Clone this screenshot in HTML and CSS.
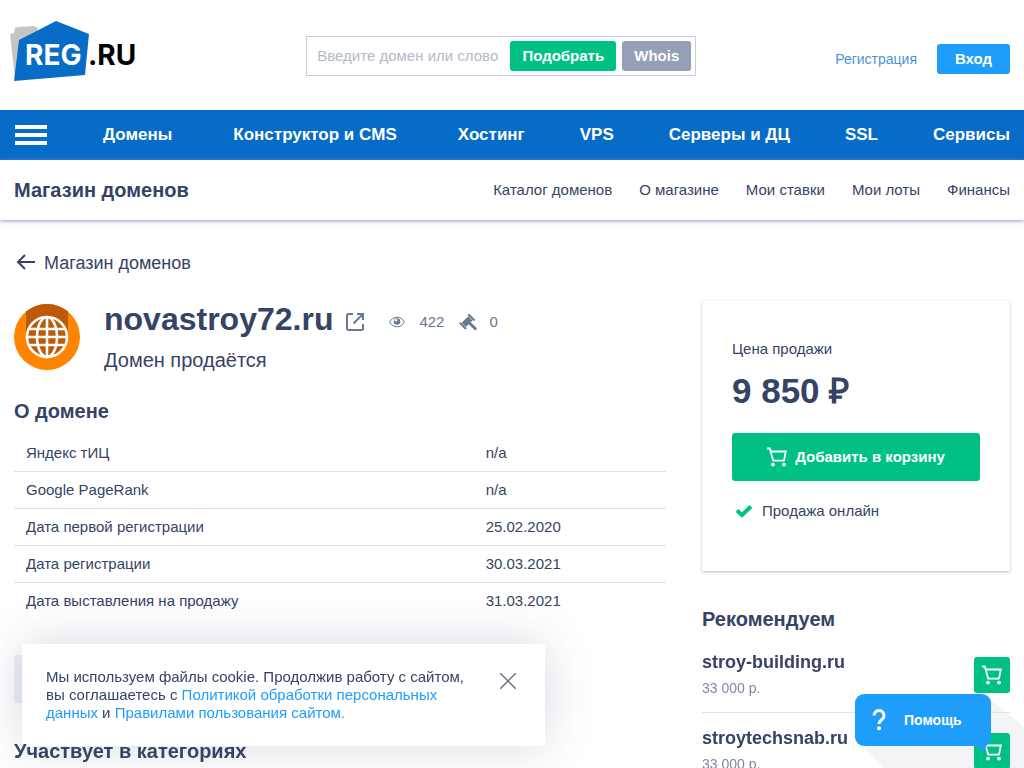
FILE: index.html
```
<!DOCTYPE html>
<html lang="ru">
<head>
<meta charset="utf-8">
<meta name="viewport" content="width=device-width, initial-scale=1">
<title>novastroy72.ru — Магазин доменов</title>
<link rel="stylesheet" href="styles.css">
</head>
<body>
<svg class="sprite" aria-hidden="true">
  <symbol id="cart" viewBox="0 0 20 20">
    <path d="M0 1.500h2.800l3.400 12.200h11.300M3.800 4.500h15L17 13.700" fill="none" stroke="currentColor" stroke-width="1.800"/>
    <circle cx="6" cy="17.600" r="1.900" fill="currentColor"/>
    <circle cx="17" cy="17.600" r="1.900" fill="currentColor"/>
  </symbol>
</svg>

<header class="header">
  <a class="logo" href="#" aria-label="REG.RU">
    <svg width="130" height="64" viewBox="0 0 130 64">
      <path d="M0 14l4-1 1-5 3-1 16-1 4 2-10 34L5 58z" fill="#c4c6c6"/>
      <path d="M46 1L79 14 75 55 4 61 9 20z" fill="#076bc8"/>
      <text class="logo-text" x="15" y="45" fill="#fff">REG</text>
      <text class="logo-text" x="78" y="45" fill="#000">.RU</text>
    </svg>
  </a>
  <form class="search">
    <input class="search-input" type="text" placeholder="Введите домен или слово" aria-label="Введите домен или слово">
    <button class="btn btn-green" type="button">Подобрать</button>
    <button class="btn btn-gray" type="button">Whois</button>
  </form>
  <div class="account">
    <a href="#">Регистрация</a>
    <button class="btn btn-login" type="button">Вход</button>
  </div>
</header>

<nav class="nav">
  <button class="burger" type="button" aria-label="Меню"><span></span><span></span><span></span></button>
  <a href="#">Домены</a>
  <a class="nav-wide" href="#">Конструктор и CMS</a>
  <a class="nav-wide" href="#">Хостинг</a>
  <a href="#">VPS</a>
  <a href="#">Серверы и ДЦ</a>
  <a href="#">SSL</a>
  <a href="#">Сервисы</a>
</nav>

<div class="subnav">
  <a class="subnav-title" href="#">Магазин доменов</a>
  <nav class="subnav-links">
    <a href="#">Каталог доменов</a>
    <a href="#">О магазине</a>
    <a href="#">Мои ставки</a>
    <a href="#">Мои лоты</a>
    <a href="#">Финансы</a>
  </nav>
</div>

<main class="page">
  <a class="back" href="#">
    <svg width="20" height="18" viewBox="0 0 20 18"><path d="M19 8H2M9 1L2 8l7 7" fill="none" stroke="currentColor" stroke-width="2"/></svg>
    Магазин доменов
  </a>
  <div class="columns">
    <div class="content">
      <section class="lot">
        <svg class="globe" width="66" height="66" viewBox="0 0 66 66">
          <circle cx="33" cy="33" r="33" fill="#ff8500"/>
          <path d="M12 33V7.500a33 33 0 0 1 42 0V33a21 21 0 0 1-42 0z" fill="#bc5a09"/>
          <g fill="none" stroke="#fff" stroke-width="2.600">
            <circle cx="33" cy="33" r="20"/>
            <ellipse cx="33" cy="33" rx="10" ry="20"/>
            <path d="M33 13v40M13 33h40M15 25h36M15 41h36"/>
          </g>
        </svg>
        <div>
          <div class="lot-head">
            <h1 class="lot-name">novastroy72.ru</h1>
            <a class="external" href="#" aria-label="Открыть сайт"><svg width="20" height="20" viewBox="0 0 20 20"><path d="M8 2H3.500A1.500 1.500 0 0 0 2 3.500v13A1.500 1.500 0 0 0 3.500 18h13a1.500 1.500 0 0 0 1.500-1.500V12M12 2h6v6M18 2L8.500 11.500" fill="none" stroke="currentColor" stroke-width="2"/></svg></a>
            <span class="stat">
              <svg width="16" height="12" viewBox="0 0 16 12"><path d="M.6 6C4-.4 12-.4 15.400 6 12 12.400 4 12.400.6 6z" fill="none" stroke="currentColor"/><circle cx="8" cy="5.500" r="3.200" fill="currentColor"/><circle cx="7" cy="4.300" r="1.200" fill="#fff"/></svg>
              422
            </span>
            <span class="stat">
              <svg width="18" height="18" viewBox="0 0 18 18"><g fill="none" stroke="currentColor"><path d="M9.300 1.300l6.200 6.200M.8 9.800l6.200 6.200" stroke-width="2"/><path d="M4.800 11.800l6.500-6.500" stroke-width="6"/><path d="M10 9.500l7.200 7" stroke-width="3"/></g></svg>
              0
            </span>
          </div>
          <p class="lot-status">Домен продаётся</p>
        </div>
      </section>

      <h2 class="heading">О домене</h2>
      <table class="facts">
        <tr><th scope="row">Яндекс тИЦ</th><td>n/a</td></tr>
        <tr><th scope="row">Google PageRank</th><td>n/a</td></tr>
        <tr><th scope="row">Дата первой регистрации</th><td>25.02.2020</td></tr>
        <tr><th scope="row">Дата регистрации</th><td>30.03.2021</td></tr>
        <tr><th scope="row">Дата выставления на продажу</th><td>31.03.2021</td></tr>
      </table>
      <div class="strip"></div>
      <h2 class="heading heading-front">Участвует в категориях</h2>
    </div>

    <aside>
      <section class="price-card">
        <p class="price-label">Цена продажи</p>
        <p class="price">9 850 ₽</p>
        <button class="buy" type="button"><svg width="20" height="20"><use href="#cart"/></svg>Добавить в корзину</button>
        <p class="online"><svg width="18" height="14" viewBox="0 0 18 14"><path d="M2 6.500l5 4.500L16 2.500" fill="none" stroke="#00c183" stroke-width="4"/></svg>Продажа онлайн</p>
      </section>
      <h2 class="heading">Рекомендуем</h2>
      <ul class="offers">
        <li class="offer">
          <div><a class="offer-name" href="#">stroy-building.ru</a><p class="offer-price">33 000 р.</p></div>
          <button class="offer-cart" type="button" aria-label="В корзину"><svg width="20" height="20"><use href="#cart"/></svg></button>
        </li>
        <li class="offer">
          <div><a class="offer-name" href="#">stroytechsnab.ru</a><p class="offer-price">33 000 р.</p></div>
          <button class="offer-cart" type="button" aria-label="В корзину"><svg width="20" height="20"><use href="#cart"/></svg></button>
        </li>
      </ul>
    </aside>
  </div>
</main>

<div class="cookie">
  <p>Мы используем файлы cookie. Продолжив работу с сайтом, вы соглашаетесь с <a href="#">Политикой обработки персональных данных</a> и <a href="#">Правилами пользования сайтом.</a></p>
  <button class="cookie-close" type="button" aria-label="Закрыть"><svg width="16" height="16" viewBox="0 0 16 16"><path d="M0 0l16 16M16 0L0 16" stroke="#6b7085" stroke-width="1.500"/></svg></button>
</div>

<svg class="help-shade" width="169" height="74" viewBox="0 0 169 74"><path d="M2 47L29 74H169V33L134 4v46z" fill="#f3f4f6"/></svg>
<div class="help-box">
  <button class="help" type="button">
    <svg width="14" height="22" viewBox="0 0 14 22"><path d="M2 6.500a5 5 0 1 1 8.300 3.700C8 12 7 12.500 7 15" fill="none" stroke="#fff" stroke-width="3"/><circle cx="7" cy="19.200" r="2" fill="#fff"/></svg>
    Помощь
  </button>
  <svg class="help-tail" width="18" height="14" viewBox="0 0 18 14"><path d="M0 0h18c0 3-4 6-6 11-1 2-2 3-3 2C8 11 4 8 0 8z" fill="#1f9dfb"/></svg>
</div>
</body>
</html>
```

FILE: styles.css
```
* { box-sizing: border-box; }
body {
  margin: 0;
  height: 100vh;
  overflow: hidden;
  background: #fff;
  color: #364364;
  font: 15px/18px "Liberation Sans", Arial, sans-serif;
}
h1, h2, p, ul { margin: 0; padding: 0; }
a { color: inherit; text-decoration: none; }
button { border: 0; padding: 0; font: inherit; color: #fff; cursor: pointer; }
svg { display: block; flex: none; }
.sprite { position: absolute; width: 0; height: 0; }

.header {
  display: grid;
  grid-template-columns: 17fr 390px 18fr;
  align-items: center;
  height: 110px;
  padding: 0 14px 0 10px;
}
.logo { margin-bottom: 6px; }
.logo-text { font: bold 28px Inter, sans-serif; }
.search {
  display: flex;
  align-items: center;
  gap: 6px;
  height: 40px;
  margin-top: 2px;
  padding: 0 4px 0 10px;
  border: 1px solid #c8ced8;
}
.search-input {
  flex: 1;
  min-width: 0;
  padding: 0;
  border: 0;
  outline: 0;
  color: #364364;
  font: 15px/18px "Liberation Sans", Arial, sans-serif;
}
.search-input::placeholder { color: #b3bac9; }
.btn {
  height: 30px;
  border-radius: 3px;
  font: bold 15px/30px "Liberation Sans", Arial, sans-serif;
}
.btn-green { width: 106px; background: #00c183; }
.btn-gray { width: 69px; background: #95a0b8; }
.btn-login { width: 73px; background: #1f9dfb; }
.account {
  display: flex;
  justify-content: flex-end;
  align-items: center;
  gap: 20px;
  margin-top: 8px;
  color: #4a94da;
  font-size: 14px;
}

.nav {
  display: flex;
  justify-content: space-between;
  align-items: center;
  height: 50px;
  padding: 0 14px;
  background: #076bc8;
  color: #fff;
  font-size: 17px;
  font-weight: bold;
}
.nav-wide { margin-left: 6px; }
.burger {
  display: grid;
  gap: 4px;
  width: 34px;
  padding: 0 1px;
  background: none;
}
.burger span { height: 4px; background: #fff; }

.subnav {
  display: flex;
  justify-content: space-between;
  align-items: center;
  height: 60px;
  padding: 0 14px;
  box-shadow: 0 1px 4px #8c9abf;
}
.subnav-title { font-size: 20px; font-weight: bold; line-height: 24px; }
.subnav-links { display: flex; gap: 27px; }

.page { padding: 31px 14px 0; }
.back { display: flex; align-items: center; gap: 8px; padding-left: 2px; font-size: 18px; line-height: 24px; }
.columns { display: grid; grid-template-columns: minmax(0, 1fr) 308px; gap: 36px; margin-top: 25px; }
.lot { display: flex; gap: 24px; margin-bottom: 26px; }
.globe { margin-top: 4px; }
.lot-head { display: flex; align-items: center; height: 38px; }
.lot-name { font-size: 32px; line-height: 38px; }
.external { margin: 6px 0 0 12px; color: #6b7892; }
.stat { display: flex; align-items: center; gap: 14px; margin-left: 24px; padding-top: 6px; color: #6b7892; }
.stat + .stat { margin-left: 15px; gap: 12px; }
.lot-status { margin-top: 9px; font-size: 20px; line-height: 26px; }
.heading { font-size: 20px; line-height: 24px; }
.facts { width: 100%; margin-top: 12px; border-spacing: 0; }
.facts th, .facts td {
  height: 37px;
  padding: 0 12px;
  border-bottom: 1px solid #dfe2e8;
  text-align: left;
  font-weight: normal;
}
.facts tr:last-child > * { border-color: transparent; }
.facts th { width: 70.5%; }
.strip { width: 480px; height: 48px; margin: 35px 0 36px; background: #eceff5; border-radius: 3px; }
.heading-front { position: relative; z-index: 3; }

.price-card {
  height: 270px;
  margin: 1px 0 36px;
  padding: 38px 30px 0;
  border-radius: 2px;
  box-shadow: 0 1px 3px #b5bccb;
}
.price-label { line-height: 20px; }
.price { margin-top: 10px; font-size: 35px; font-weight: bold; line-height: 44px; }
.buy {
  display: flex;
  justify-content: center;
  align-items: center;
  gap: 8px;
  width: 100%;
  height: 48px;
  margin-top: 20px;
  border-radius: 3px;
  background: #00c183;
  font-weight: bold;
}
.online { display: flex; align-items: center; gap: 9px; margin-top: 21px; padding-left: 3px; }
.offers { position: relative; z-index: 1; margin-top: 6px; list-style: none; }
.offer { display: flex; justify-content: space-between; align-items: center; height: 76px; border-bottom: 1px solid #dfe2e8; }
.offer > div { padding-bottom: 2px; }
.offer-name { display: block; font-size: 18px; font-weight: bold; line-height: 22px; }
.offer-price { margin-top: 6px; font-size: 14px; color: #8089a0; }
.offer-cart { display: grid; place-items: center; width: 36px; height: 36px; border-radius: 3px; background: #00c183; }

.cookie {
  position: fixed;
  z-index: 2;
  left: 22px;
  bottom: 22px;
  display: flex;
  align-items: flex-start;
  justify-content: space-between;
  width: 523px;
  padding: 24px 29px 24px 24px;
  background: #fff;
  box-shadow: 0 0 50px #36436433;
}
.cookie p { width: 424px; }
.cookie a { color: #1f9dfb; }
.cookie-close { margin-top: 5px; background: none; }

.help-shade { position: fixed; z-index: 0; right: 0; bottom: 0; }
.help-box { position: fixed; z-index: 4; right: 33px; bottom: 22px; }
.help {
  display: flex;
  align-items: center;
  gap: 18px;
  width: 136px;
  height: 52px;
  padding-left: 17px;
  border-radius: 9px;
  background: #1f9dfb;
  font: bold 14px/18px "Liberation Sans", Arial, sans-serif;
}
.help-tail { position: absolute; right: 0; top: 44px; }
```
